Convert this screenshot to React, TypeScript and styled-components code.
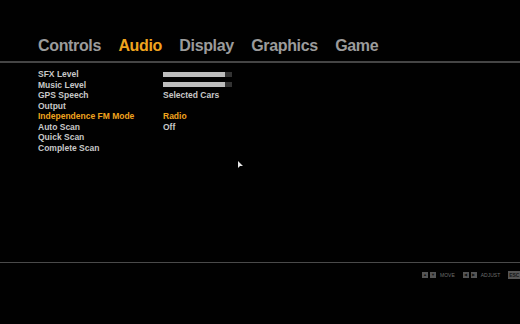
import styled, { createGlobalStyle } from "styled-components";

const Global = createGlobalStyle`
  html, body {
    margin: 0;
    padding: 0;
    background: #010101;
  }
  body {
    font-family: "Liberation Sans", Arial, sans-serif;
    overflow: hidden;
  }
`

const Screen = styled.div`
  position: relative;
  width: 520px;
  height: 324px;
  background: #010101;
  display: flex;
  flex-direction: column;
`

const TabBar = styled.nav`
  display: flex;
  gap: 17.4px;
  padding: 37px 0 0 38px;
  height: 24px;
  border-bottom: 2px solid #454545;
`

const Tab = styled.span<{ $active?: boolean }>`
  font-size: 16px;
  font-weight: bold;
  letter-spacing: -0.35px;
  color: ${(p) => (p.$active ? "#f0a41e" : "#9b9b9b")};
`

const Menu = styled.div`
  flex: 1;
  display: grid;
  grid-template-columns: 125px 1fr;
  grid-auto-rows: 10.5px;
  align-content: start;
  padding: 6px 0 0 38px;
  border-bottom: 1px solid #4a4a4a;
  margin-bottom: 61px;
`

const Label = styled.span<{ $active?: boolean }>`
  font-size: 8.5px;
  font-weight: bold;
  line-height: 10.5px;
  color: ${(p) => (p.$active ? "#f0a41e" : "#c8c8c8")};
  white-space: nowrap;
`

const Value = styled(Label)`
  display: flex;
  align-items: center;
`

const Bar = styled.div`
  width: 69px;
  height: 5px;
  background: #333;
`

const BarFill = styled.div`
  height: 100%;
  background: #bdbdbd;
`

const Footer = styled.div`
  position: absolute;
  left: 422px;
  top: 271px;
  display: flex;
  align-items: center;
  gap: 2px;
  font-size: 5px;
  color: #6e6e6e;
  white-space: nowrap;
`

const Key = styled.span`
  display: inline-flex;
  align-items: center;
  justify-content: center;
  width: 6px;
  height: 6px;
  background: #555;
  color: #111;
  font-size: 4px;
  line-height: 1;
`

const Hint = styled.span`
  margin: 0 6px 0 2px;
`

const EscKey = styled.span`
  background: #555;
  color: #151515;
  padding: 1px 1px;
  font-size: 5px;
  font-weight: bold;
`

const Cursor = styled.svg`
  position: absolute;
  left: 238px;
  top: 161px;
`

const rows: { label: string; value?: string; bar?: number; active?: boolean }[] = [
  { label: "SFX Level", bar: 0.9 },
  { label: "Music Level", bar: 0.9 },
  { label: "GPS Speech", value: "Selected Cars" },
  { label: "Output" },
  { label: "Independence FM Mode", value: "Radio", active: true },
  { label: "Auto Scan", value: "Off" },
  { label: "Quick Scan" },
  { label: "Complete Scan" },
]

export default function App() {
  return (
    <>
      <Global />
      <Screen>
        <TabBar>
          <Tab>Controls</Tab>
          <Tab $active>Audio</Tab>
          <Tab>Display</Tab>
          <Tab>Graphics</Tab>
          <Tab>Game</Tab>
        </TabBar>
        <Menu>
          {rows.map((r) => (
            <>
              <Label key={r.label} $active={r.active}>{r.label}</Label>
              <Value key={r.label + "v"} $active={r.active}>
                {r.bar !== undefined ? (
                  <Bar>
                    <BarFill style={{ width: `${r.bar * 100}%` }} />
                  </Bar>
                ) : (
                  r.value
                )}
              </Value>
            </>
          ))}
        </Menu>
        <Footer>
          <Key>▲</Key>
          <Key>▼</Key>
          <Hint>MOVE</Hint>
          <Key>◀</Key>
          <Key>▶</Key>
          <Hint>ADJUST</Hint>
          <EscKey>ESC</EscKey>
        </Footer>
        <Cursor width="6" height="8" viewBox="0 0 6 8">
          <path d="M0 0 L0 7 L2 5 L5 5 Z" fill="#e8e8e8" />
        </Cursor>
      </Screen>
    </>
  )
}
